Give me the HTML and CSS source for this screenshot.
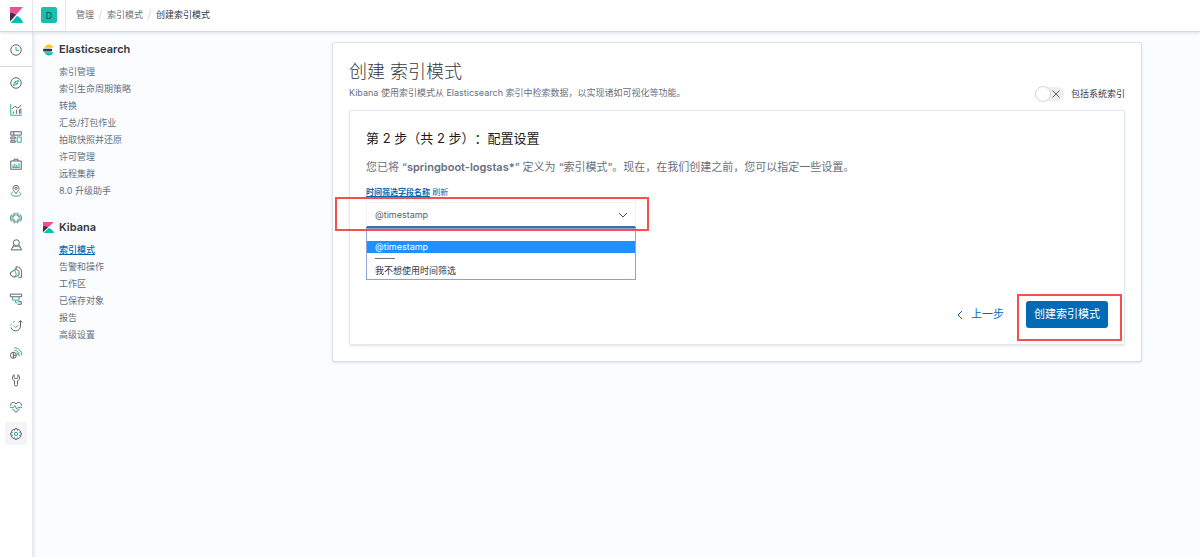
FILE: index.html
```html
<!DOCTYPE html>
<html lang="zh-CN">
<head>
	<meta charset="UTF-8">
	<title>创建索引模式 - Kibana</title>
	<link rel="stylesheet" href="styles.css">
</head>
<body>
	<svg class="defs" width="0" height="0">
		<symbol id="kibana" viewBox="0 0 24 32" preserveAspectRatio="none">
			<path fill="#f04e98" d="M0 0v29L24 0z"/>
			<path fill="#343741" d="M0 12v17l11-13.400C8 13.300 4 12 0 12z"/>
			<path fill="#00bfb3" d="M13 17.500 1.200 31.900H24c-1.200-6-5-11-11-14.400z"/>
		</symbol>
	</svg>

	<header class="header">
		<a class="logo" href="#" aria-label="Kibana"><svg width="13" height="16"><use href="#kibana"/></svg></a>
		<div class="space"><button type="button" class="space-btn">D</button></div>
		<nav class="crumbs">
			<a href="#">管理</a><i></i><a href="#">索引模式</a><i></i><span>创建索引模式</span>
		</nav>
	</header>

	<div class="body">
		<nav class="rail">
			<div class="rail-top">
				<a href="#" aria-label="最近查看"><svg viewBox="0 0 16 16"><circle cx="8" cy="8" r="7"/><path class="g" d="M8 4v4.500h4"/></svg></a>
			</div>
			<a href="#" aria-label="Discover"><svg viewBox="0 0 16 16"><circle cx="8" cy="8" r="7"/><path class="g" d="M11.500 4.500 9.500 9.500 4.500 11.500 6.500 6.500zM6.500 6.500l3 3"/></svg></a>
			<a href="#" aria-label="可视化"><svg viewBox="0 0 16 16"><path class="g" d="M1 0v15h15"/><path d="M3 6.500 6.500 3l4 2.500L15 1.500M4.500 13v-3M8.500 13V7.500M12.500 13V7M14.500 13V6"/></svg></a>
			<a href="#" aria-label="仪表板"><svg viewBox="0 0 16 16"><path d="M1 1h14v4.500H1zM1 8h6v2.500H1zM1 13h6v2H1zM5 1v4.500"/><path class="g" d="M9.500 8H15v7H9.500z"/></svg></a>
			<a href="#" aria-label="Canvas"><svg viewBox="0 0 16 16"><path d="M1 4h14v11H1zM5.500 4V1.500h5V4"/><path class="g" d="M4 12V9M6.500 12V7.500M9 12V9M12 12V7M3 12.500h10"/></svg></a>
			<a href="#" aria-label="Maps"><svg viewBox="0 0 16 16"><path d="M8 11.500C5 8 4 6.500 4 4.500a4 4 0 0 1 8 0c0 2-1 3.500-4 7z"/><circle cx="8" cy="4.500" r="1.500"/><path class="g" d="M3.500 9.500C-1 12 3 15 8 15s9-3 4.500-5.500"/></svg></a>
			<a href="#" aria-label="Machine Learning"><svg viewBox="0 0 16 16"><path d="M5.500 1v4.500H2M10.500 1v4.500H14M5.500 15v-4.500H2M10.500 15v-4.500H14"/><path class="g" d="M0 8h5M11 8h5M2.500 3C0 6 0 10 2.500 13M13.500 3c2.500 3 2.500 7 0 10M8 1v4M8 11v4"/></svg></a>
			<a href="#" aria-label="Metrics"><svg viewBox="0 0 16 16"><circle cx="8.500" cy="5" r="4"/><path d="M5 8 1.500 14.500h14L12 8"/><path class="g" d="M4 11c3-2 6-2 9 0"/></svg></a>
			<a href="#" aria-label="Logs"><svg viewBox="0 0 16 16"><path d="M8 4V1c5 0 7.500 3 7.500 7.500V15H11M8 4 0.500 9v3l5 3L12 12V7z"/><path class="g" d="m2 8.500 4-3.500 2.500 6-3 3.500"/></svg></a>
			<a href="#" aria-label="APM"><svg viewBox="0 0 16 16"><path d="M0.500 1.500h15V5H0.500zM10 15h5v-3.500h-4"/><path class="g" d="M3.500 5v4.500h8.500V5M7.500 9.500V13H10"/></svg></a>
			<a href="#" aria-label="Uptime"><svg viewBox="0 0 16 16"><path d="M14 1v7c0 4-3 6.500-6.500 6.500S2 12.500 1.500 10M11.500 3.500 14 .8l2.500 2.700"/><path class="g" d="m5 7.500 2.500 2.500L11 7M1 7l1-2M4 3l2-1"/></svg></a>
			<a href="#" aria-label="SIEM"><svg viewBox="0 0 16 16"><circle cx="4.500" cy="11" r="4"/><path d="M4.500 7v8M4.500 11h4"/><path class="g" d="M6 4.500c4 0 6 3 6 6.500M5.500 1.200C11.500 1.200 15.500 5 15.500 11M9 7.500l4 5"/></svg></a>
			<a href="#" aria-label="开发工具"><svg viewBox="0 0 16 16"><path d="M5.500 1C2 3 2.500 8 6 9v5a2 2 0 0 0 4 0V9c3.500-1 4-6 .5-8v4L8 6.500 5.500 5z"/></svg></a>
			<a href="#" aria-label="Stack Monitoring"><svg viewBox="0 0 16 16"><path d="M1 6.500C0 2 5 0 8 4c3-4 8-2 7 2.500M3 10.500l5 4.500 5-4.500"/><path class="g" d="M0 8.500h5l1.500-2.500L9 11l1.500-2.500H16"/></svg></a>
			<a class="on" href="#" aria-label="管理"><svg viewBox="0 0 16 16"><path d="M6.500 1h3l.5 2 1.800-1L14 4.200 13 6l2 .5v3l-2 .5 1 1.800-2.200 2.200-1.800-1-.5 2h-3L6 13l-1.800 1L2 11.800 3 10l-2-.5v-3L3 6 2 4.200 4.200 2 6 3z"/><circle class="g" cx="8" cy="8" r="2.200"/></svg></a>
		</nav>

		<aside class="menu">
			<h2>
				<svg width="11" height="12" viewBox="0 0 32 32">
					<path fill="#fec514" d="M3 9.500C6 4 11 0 17 0c5.500 0 10 3 13 7l-3 2.500z"/>
					<path fill="#343741" d="M1 12h22a4 4 0 0 1 0 8H1a16 16 0 0 1 0-8z"/>
					<path fill="#00bfb3" d="M3 22.500h24l3 2.500c-3 4-7.500 7-13 7-6 0-11-4-14-9.500z"/>
				</svg>
				Elasticsearch
			</h2>
			<ul>
				<li><a href="#">索引管理</a></li>
				<li><a href="#">索引生命周期策略</a></li>
				<li><a href="#">转换</a></li>
				<li><a href="#">汇总/打包作业</a></li>
				<li><a href="#">拍取快照并还原</a></li>
				<li><a href="#">许可管理</a></li>
				<li><a href="#">远程集群</a></li>
				<li><a href="#">8.0 升级助手</a></li>
			</ul>
			<h2>
				<svg width="11" height="11"><use href="#kibana"/></svg>
				Kibana
			</h2>
			<ul>
				<li><a class="on" href="#">索引模式</a></li>
				<li><a href="#">告警和操作</a></li>
				<li><a href="#">工作区</a></li>
				<li><a href="#">已保存对象</a></li>
				<li><a href="#">报告</a></li>
				<li><a href="#">高级设置</a></li>
			</ul>
		</aside>

		<main class="main">
			<section class="panel">
				<h1>创建 索引模式</h1>
				<div class="intro">
					<p>Kibana 使用索引模式从 Elasticsearch 索引中检索数据，以实现诸如可视化等功能。</p>
					<label class="switch"><input type="checkbox" role="switch"><span class="track"><svg width="8" height="8" viewBox="0 0 8 8"><path d="m.5.500 7 7M7.500.500l-7 7"/></svg></span>包括系统索引</label>
				</div>

				<form class="step">
					<h3>第 2 步（共 2 步）：配置设置</h3>
					<p class="desc">您已将 “<b>springboot-logstas*</b>” 定义为 “索引模式”。现在，在我们创建之前，您可以指定一些设置。</p>
					<div class="labels"><label for="field">时间筛选字段名称</label> <a href="#">刷新</a></div>
					<div class="field">
						<select id="field">
							<option>@timestamp</option>
							<option>我不想使用时间筛选</option>
						</select>
						<svg class="arrow" width="10" height="6" viewBox="0 0 10 6"><path d="m1 1 4 4 4-4"/></svg>
						<ul class="options">
							<li></li>
							<li class="on">@timestamp</li>
							<li class="line"></li>
							<li>我不想使用时间筛选</li>
						</ul>
						<div class="mark"></div>
					</div>
					<div class="actions">
						<button type="button" class="back"><svg width="6" height="8" viewBox="0 0 6 8"><path d="M5 0 1 4l4 4"/></svg>上一步</button>
						<div class="submit">
							<button type="button" class="create">创建索引模式</button>
							<div class="mark"></div>
						</div>
					</div>
				</form>
			</section>
		</main>
	</div>
</body>
</html>
```
FILE: styles.css
```css
* {
	box-sizing: border-box;
	margin: 0;
	padding: 0;
}
html, body {
	height: 100%;
}
body {
	display: flex;
	flex-direction: column;
	background: #fafcfe;
	color: #69707d;
	font: 9px/17px Inter, "Noto Sans CJK SC", sans-serif;
}
ul {
	list-style: none;
}
a {
	color: inherit;
	text-decoration: none;
}
button, select {
	font: inherit;
	border: none;
	cursor: pointer;
}
svg {
	display: block;
	fill: none;
}
.defs {
	position: absolute;
}

/* 顶部 */
.header {
	display: flex;
	flex: none;
	height: 32px;
	background: #fff;
	border-bottom: 1px solid #d3dae6;
	box-shadow: 0 1px 3px rgba(152, 162, 179, .3);
	position: relative;
	z-index: 2;
}
.logo, .space {
	display: flex;
	align-items: center;
	justify-content: center;
	width: 33px;
	padding-bottom: 2px;
	border-right: 1px solid #e3e7ee;
}
.space-btn {
	width: 16px;
	height: 16px;
	border-radius: 2px;
	background: #17bfb0;
	color: #1d3f45;
}
.crumbs {
	display: flex;
	align-items: center;
	padding: 0 10px 2px;
}
.crumbs i {
	width: 1px;
	height: 11px;
	margin: 0 6px;
	background: #d9dee7;
	transform: rotate(15deg);
}
.crumbs span {
	color: #343741;
}

.body {
	display: flex;
	flex: 1;
}

/* 左侧图标栏 */
.rail {
	flex: none;
	width: 33px;
	background: #fff;
	border-right: 1px solid #e6eaf0;
	box-shadow: 1px 0 3px rgba(152, 162, 179, .25);
}
.rail-top {
	padding: 4px 0 3px;
	margin-bottom: 2px;
	border-bottom: 1px solid #d3dae6;
}
.rail a {
	display: flex;
	align-items: center;
	justify-content: center;
	height: 27px;
}
.rail svg {
	width: 12px;
	height: 12px;
	stroke: #5b606b;
	stroke-width: 1.3;
	overflow: visible;
}
.rail .g {
	stroke: #2bab8f;
}
.rail .on {
	height: 23px;
	margin: 2px 5px;
	border-radius: 3px;
	background: #f3f4f7;
}

/* 管理菜单 */
.menu {
	flex: none;
	width: 299px;
	padding: 9px 10px;
}
.menu h2 {
	display: flex;
	align-items: center;
	gap: 5px;
	color: #343741;
	font-size: 11px;
	font-weight: 600;
}
.menu ul {
	padding: 5px 0 20px 16px;
}
.menu .on {
	color: #006bb4;
	font-weight: 500;
	text-decoration: underline;
}

.main {
	flex: 1;
	padding: 10px 58px 10px 0;
}
.panel {
	padding: 16px;
	background: #fff;
	border: 1px solid #d9e0e9;
	border-radius: 3px;
	box-shadow: 0 1px 2px rgba(152, 162, 179, .3);
}
.panel h1 {
	color: #343741;
	font-size: 18px;
	font-weight: 300;
	line-height: 26px;
}
.intro {
	display: flex;
	justify-content: space-between;
}
.intro p {
	line-height: 16px;
}
.switch {
	display: flex;
	align-items: center;
	color: #343741;
}
.switch input {
	position: absolute;
	opacity: 0;
}
.track {
	display: flex;
	align-items: center;
	justify-content: space-between;
	width: 29px;
	height: 14px;
	margin-right: 7px;
	padding-right: 4px;
	border-radius: 7px;
	background: #eceef0;
}
.track::before {
	content: "";
	width: 14px;
	height: 14px;
	border: 1px solid #d3d5d9;
	border-radius: 50%;
	background: #fff;
}
.track svg {
	stroke: #5a5e67;
}

/* 第 2 步 */
.step {
	margin-top: 8px;
	padding: 16px;
	border: 1px solid #e4e8ef;
	border-radius: 2px;
	box-shadow: 0 1px 2px rgba(152, 162, 179, .3);
}
.step h3 {
	color: #1a1c21;
	font-size: 13px;
	font-weight: 400;
	line-height: 22px;
	text-spacing-trim: space-all;
}
.desc {
	margin-top: 10px;
	font-size: 11px;
}
.desc b {
	font-weight: 600;
}
.labels {
	margin-top: 10px;
	color: #006bb4;
	font-size: 8px;
	line-height: 12px;
}
.labels label {
	font-weight: 600;
	text-decoration: underline;
}
.field {
	position: relative;
	width: 270px;
	margin-top: 4px;
}
.field select {
	display: block;
	width: 100%;
	height: 26px;
	padding: 0 8px;
	appearance: none;
	background: #fff;
	border: 1px solid #f0f2f5;
	border-bottom: 2px solid #3c6fae;
	color: #5a5f69;
	outline: none;
}
.arrow {
	position: absolute;
	right: 8px;
	top: 10px;
	stroke: #4b4f58;
	pointer-events: none;
}
.options {
	position: absolute;
	top: 26px;
	left: 0;
	width: 100%;
	background: #fff;
	border: 1px solid #8ba3cf;
	color: #343741;
	line-height: 12px;
}
.options li {
	height: 12px;
	padding: 0 8px;
}
.options li:last-child {
	height: 14px;
}
.options .on {
	background: #1e90ff;
	color: #fff;
}
.options .line::before {
	content: "";
	display: block;
	width: 20px;
	border-bottom: 1px solid #6d7078;
	transform: translateY(5px);
}
.actions {
	display: flex;
	align-items: center;
	justify-content: flex-end;
	gap: 22px;
	margin-top: 73px;
}
.actions button {
	font-size: 11px;
}
.back {
	display: flex;
	align-items: center;
	gap: 8px;
	background: none;
	color: #006bb4;
}
.back svg {
	stroke: #006bb4;
}
.submit {
	position: relative;
}
.create {
	display: block;
	height: 27px;
	padding: 0 8px;
	border-radius: 3px;
	background: #006bb4;
	color: #fff;
}

/* 红框标注 */
.mark {
	position: absolute;
	border: 2px solid #f5504e;
	pointer-events: none;
}
.field .mark {
	inset: -5px -13px -3px -31px;
}
.submit .mark {
	inset: -7px -14px -13px -9px;
}
```
